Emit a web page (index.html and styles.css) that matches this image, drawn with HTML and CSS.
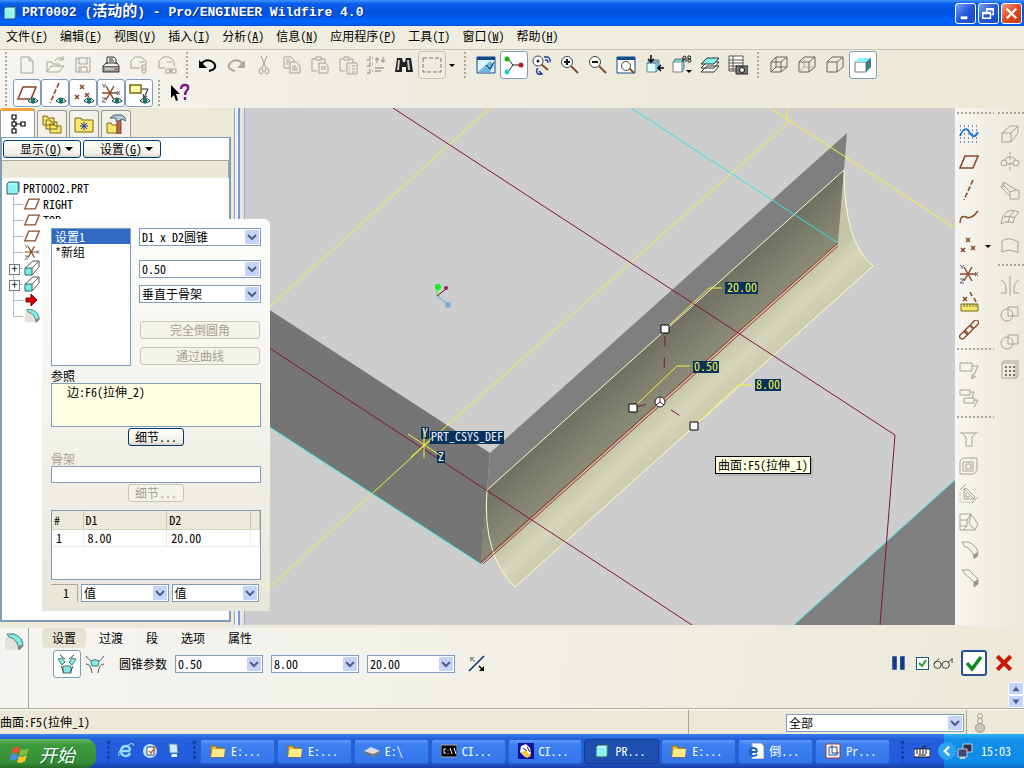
FILE: index.html
```
<!DOCTYPE html>
<html lang="zh-CN">
<head>
  <meta charset="UTF-8">
  <meta name="viewport" content="width=device-width, initial-scale=1.0">
  <title>PRT0002 (活动的) - Pro/ENGINEER Wildfire 4.0</title>
  <link rel="stylesheet" href="styles.css">
</head>
<body>
<!-- icon set -->
<svg class="defs" aria-hidden="true">
  <defs>
    <symbol id="cube" viewBox="0 0 16 16"><path d="M2 4l2-2h10v9l-2 3H2z" fill="#8ef2f2" stroke="#356" /><path d="M12 4l2-2v9l-2 3z" fill="#2b8c90"/><path d="M3 4h9v9" fill="none" stroke="#d8ffff"/></symbol>
    <symbol id="plane" viewBox="0 0 20 20"><path d="M6 4h13l-5 12H1z" fill="none" stroke="#8b4a2b" stroke-width="1.6"/></symbol>
    <symbol id="axis" viewBox="0 0 20 20"><path d="M14 0L5 20" fill="none" stroke="#8b4a2b" stroke-width="1.6" stroke-dasharray="5 2"/></symbol>
    <symbol id="points" viewBox="0 0 20 20"><path d="M7 2l4 4m0-4l-4 4M2 12l4 4m0-4l-4 4M12 10l4 4m0-4l-4 4" fill="none" stroke="#8b4a2b" stroke-width="1.6"/></symbol>
    <symbol id="csys" viewBox="0 0 20 20"><path d="M9 10H1m8 0h8M5 3l8 14M13 3L5 17" fill="none" stroke="#8b4a2b" stroke-width="1.5"/><path d="M1 1l2 2 2-2M3 3v2M16 8l3 4m0-4l-3 4M1 15h4l-4 4h4" fill="none" stroke="#567"/></symbol>
    <symbol id="eye" viewBox="0 0 10 7"><path d="M0 4Q5-2 10 4Q5 8 0 4" fill="#dfe" stroke="#333"/><circle cx="5" cy="4" r="2.4" fill="#087a7a"/></symbol>
    <symbol id="new" viewBox="0 0 20 20"><path d="M4 2h8l4 4v12H4zM12 2v4h4" class="g"/></symbol>
    <symbol id="open" viewBox="0 0 20 20"><path d="M2 17V7h5l1 2h6v2M2 17l4-6h13l-5 6zM10 6q3-5 8-2m0-3v4h-4" class="g"/></symbol>
    <symbol id="save" viewBox="0 0 20 20"><path d="M3 3h14v14H3zM6 3v6h8V3M6 17v-5h8v5M8 13v3" class="g"/></symbol>
    <symbol id="print" viewBox="0 0 20 20"><path d="M2 11h16v6H2z" fill="#999" stroke="#333"/><path d="M6 9V2h7l2 2v5M8 4h4M8 6h5M2 11l3-3h11l2 3" fill="#eee" stroke="#333"/><path d="M4 14h9" stroke="#eee"/><path d="M14 14h2" stroke="#c33"/></symbol>
    <symbol id="mail" viewBox="0 0 20 20"><path d="M2 13V6l4-4h6l5 4v4M2 13h9M10 7h5M13 10v7q2 3 4 0v-6q-2-3-4 0M15 12v4" class="g"/></symbol>
    <symbol id="maillink" viewBox="0 0 20 20"><path d="M2 13V6l4-4h6l5 4v5M2 13h6M10 7h5M9 14h4v4H9zM14 14h5v4h-5zM12 16h4" class="g"/></symbol>
    <symbol id="undo" viewBox="0 0 20 20"><path d="M3 9q6-7 13-1q4 6-5 8" fill="none" stroke="#000" stroke-width="2"/><path d="M1 5v8h8z"/></symbol>
    <symbol id="redo" viewBox="0 0 20 20"><path d="M17 9q-6-7-13-1q-4 6 5 8" fill="none" stroke="#aaa89c" stroke-width="2"/><path d="M19 5v8h-8z" fill="#aaa89c"/></symbol>
    <symbol id="cut" viewBox="0 0 20 20"><path d="M7 1l5 12M13 1L8 13" class="g"/><ellipse cx="7" cy="16" rx="2" ry="3" class="g"/><ellipse cx="13" cy="16" rx="2" ry="3" class="g"/></symbol>
    <symbol id="copy" viewBox="0 0 20 20"><path d="M2 2h7l3 3v8H2zM4 5h4M4 7h3M4 9h3" class="g"/><path d="M8 7h6l4 4v7H8z" fill="#f1efe6" stroke="#a5a396"/><path d="M10 11h4M10 13h6M10 15h6" class="g"/></symbol>
    <symbol id="paste" viewBox="0 0 20 20"><path d="M7 16H2V4h4V2h5v2h4v4M9 8h6l3 3v7H9zM6 5h6M11 12h5M11 14h5" class="g"/></symbol>
    <symbol id="pastes" viewBox="0 0 20 20"><path d="M7 16H2V4h4V2h5v2h4v4M9 8h10v11H9zM6 5h6M11 11h1M14 11h3M11 14h1M14 14h3M11 17h1M14 17h3" class="g"/></symbol>
    <symbol id="regen" viewBox="0 0 20 20"><path d="M4 1v4H1M4 7v4H1M4 14v4H1M6 3h1M6 9h1M6 16h1M11 8V3M9 5l2-2 2 2M17 2v5M15 5l2 2 2-2M9 13h9M9 16h6" class="g" stroke-width="1.3"/></symbol>
    <symbol id="find" viewBox="0 0 20 20"><path d="M3 3h5l1 4h2l1-4h5l2 14h-7v-5H8v5H1z" fill="#222"/><path d="M5 5L4 15M14 5l1 10" stroke="#ccc" stroke-width="2"/></symbol>
    <symbol id="selbox" viewBox="0 0 20 20"><path d="M1 3h18v14H1z" fill="none" stroke="#777" stroke-dasharray="4 2"/></symbol>
    <symbol id="repaint" viewBox="0 0 20 20"><path d="M1 2h18v16H1z" fill="#dff3ff" stroke="#124a91"/><path d="M1 2h18v3H1z" fill="#124a91"/><path d="M2 17L14 6l4 4-4 7z" fill="#6bb5e6"/><path d="M10 10l4 4 4-7" fill="none" stroke="#123"/></symbol>
    <symbol id="spin" viewBox="0 0 20 20"><path d="M4 4l5 6h9M9 10l-5 7" fill="none" stroke="#222"/><circle cx="3" cy="4" r="2.5" fill="#0b0"/><circle cx="17" cy="10" r="2.5" fill="#b02020"/><circle cx="3" cy="17" r="2.5" fill="#2cc"/></symbol>
    <symbol id="orient" viewBox="0 0 20 20"><path d="M9 9l7 6" stroke="#8b4a2b" stroke-width="2"/><circle cx="6" cy="6" r="5" class="k"/><circle cx="6" cy="6" r="1.5" fill="#222"/><path d="M12 2h4q3 2 2 5M13 5h2q1 1 1 3M6 13q-3 3 0 6h4M7 16l3 3-3 1" fill="none" stroke="#1b3c9b" stroke-width="1.4"/></symbol>
    <symbol id="zin" viewBox="0 0 20 20"><path d="M11 11l7 7" stroke="#8b4a2b" stroke-width="2"/><circle cx="7" cy="7" r="5.5" class="k"/><path d="M4 7h6M7 4v6" stroke="#111" stroke-width="2"/></symbol>
    <symbol id="zout" viewBox="0 0 20 20"><path d="M11 11l7 7" stroke="#8b4a2b" stroke-width="2"/><circle cx="7" cy="7" r="5.5" class="k"/><path d="M4 7h6" stroke="#111" stroke-width="2"/></symbol>
    <symbol id="refit" viewBox="0 0 20 20"><path d="M1 2h18v16H1z" fill="#fff" stroke="#124a91"/><path d="M1 2h18v3H1z" fill="#124a91"/><path d="M13 13l5 5" stroke="#8b4a2b" stroke-width="2"/><circle cx="10" cy="11" r="4.5" class="k"/></symbol>
    <symbol id="reorient" viewBox="0 0 20 20"><path d="M3 8h9v9H3z" fill="#dff"  stroke="#688"/><path d="M3 8l3-3h9l-3 3zM12 8l3-3v9l-3 3" fill="#7bd" stroke="#688"/><path d="M7 0v7M4 4l3 3 3-3M20 13h-6M17 10l-3 3 3 3" fill="none" stroke="#000" stroke-width="1.5"/></symbol>
    <symbol id="views" viewBox="0 0 20 20"><path d="M1 7h9v10H1z" fill="#fff" stroke="#777"/><path d="M1 7l2-3h9l-2 3M10 7l2-3v9l-2 4" fill="#7cc" stroke="#777"/><path d="M11 7V2l1-1h1l1 1v5M11 4h3M16 1h2l1 1-1 2h-2 2l1 1v1l-1 1h-2z" fill="none" stroke="#222"/><path d="M14 15h6l-3 3z"/></symbol>
    <symbol id="layers" viewBox="0 0 20 20"><path d="M7 11h12l-5 6H1zM7 7h12l-5 6H1z" fill="#fff" stroke="#333"/><path d="M7 3h12l-5 6H1z" fill="#7ff0ee" stroke="#333"/></symbol>
    <symbol id="vmgr" viewBox="0 0 20 20"><path d="M1 1h14v15H1zM1 5h14M1 8h14M1 11h14M1 14h14M5 1v15" fill="#fff" stroke="#555"/><path d="M8 11h12v8H8z" fill="#777" stroke="#222"/><circle cx="14" cy="15" r="2.5" fill="#eee" stroke="#111"/></symbol>
    <symbol id="wire" viewBox="0 0 20 20"><path d="M2 7h10v10H2zM7 2h11v10H7zM2 7l5-5M12 7l6-5M12 17l6-5M2 17l5-5" class="w"/></symbol>
    <symbol id="hidden" viewBox="0 0 20 20"><path d="M2 7h10v10H2zM2 7l5-5h11v10l-6 5M12 7l6-5" class="w"/><path d="M7 2v10h11M7 12l-5 5" fill="none" stroke="#aaa"/></symbol>
    <symbol id="nohid" viewBox="0 0 20 20"><path d="M2 7h10v10H2zM2 7l5-5h11v10l-6 5M12 7l6-5" class="w"/></symbol>
    <symbol id="shade" viewBox="0 0 20 20"><path d="M2 7h11v10H2z" fill="#fff" stroke="#777"/><path d="M2 7l4-4h12l-5 4z" fill="#8ef"/><path d="M13 7l5-4v9l-5 5z" fill="#347f86"/></symbol>
    <symbol id="note" viewBox="0 0 20 20"><path d="M1 2h11v8H1z" fill="#ffa" stroke="#776a10" stroke-width="1.5"/><path d="M13 6h6l-4 9M14 11l1 4 3-2" fill="none" stroke="#222"/></symbol>
    <symbol id="help" viewBox="0 0 20 20"><path d="M1 2v13l3-3 2 6 2-1-2-6h4z"/><path d="M11 6q0-4 4-4q4 0 3 4q-3 3-3 6M15 14v3" fill="none" stroke="#80128c" stroke-width="2.4"/></symbol>
    <symbol id="tree" viewBox="0 0 20 20"><path d="M4 1h4v4H4zM4 8h4v4H4zM4 15h4v4H4zM13 8h4v4h-4zM6 5v3M6 12v3M8 10h5" fill="#fff" stroke="#000" stroke-width="1.2"/></symbol>
    <symbol id="folders" viewBox="0 0 20 20"><path d="M1 2h4l1 2h6v7H1zM4 6h4l1 2h6v7H4zM8 10h4l1 2h6v7H8z" fill="#fbe66a" stroke="#77681b"/></symbol>
    <symbol id="fav" viewBox="0 0 20 20"><path d="M1 4h6l1 2h11v12H1z" fill="#fbe66a" stroke="#77681b"/><path d="M10 8v8M6 12h8M7 9l6 6M13 9l-6 6" stroke="#1238b5"/></symbol>
    <symbol id="hammer" viewBox="0 0 20 20"><path d="M1 9h4l1 2h5v8H1z" fill="#fbe66a" stroke="#77681b"/><path d="M11 6h4v14h-4z" fill="#c06a3a" stroke="#744"/><path d="M4 4l4-3h8l4 4v2l-4-2-3 2h-3V4z" fill="#bcd" stroke="#456"/></symbol>
    <symbol id="extrude" viewBox="0 0 16 16"><path d="M1 8h7v7H1z" fill="#7ee" stroke="#366"/><path d="M1 8l8-7h6v6l-7 8M8 8l7-7" fill="none" stroke="#555"/></symbol>
    <symbol id="insert" viewBox="0 0 16 16"><path d="M2 6h5V2l6 6-6 6v-4H2z" fill="#d00" stroke="#800"/></symbol>
    <symbol id="round" viewBox="0 0 20 20"><path d="M1 6l5-2q7 1 8 13l-8 1H1z" fill="#e3e2da"/><path d="M3 2h7q9 3 9 12l-4 4Q14 7 5 5z" fill="#7fe9e6" stroke="#577"/><path d="M15 14v4l4-3v-3z" fill="#888"/></symbol>
    <symbol id="sketch" viewBox="0 0 20 20"><path d="M1 2h18M1 6h18M1 10h18M1 14h18M1 18h18" stroke="#227" stroke-dasharray="1 3"/><path d="M1 12Q6 0 11 9q4 7 8-1" fill="none" stroke="#1375df" stroke-width="1.8"/></symbol>
    <symbol id="curve" viewBox="0 0 20 20"><path d="M1 15q0-8 6-6q5 3 12-6" fill="none" stroke="#8b4a2b" stroke-width="1.5"/></symbol>
    <symbol id="ruler" viewBox="0 0 20 20"><path d="M2 12h17v7H2z" fill="#f2e869" stroke="#776a10"/><path d="M5 12v3M8 12v3M11 12v3M14 12v3M17 12v3" stroke="#665"/><path d="M4 5l4 4m0-4L4 9M11 0l2 4M15 6l2 4" stroke="#8b4a2b" stroke-width="1.6"/></symbol>
    <symbol id="chain" viewBox="0 0 20 20"><g fill="none" stroke="#8b4a2b" stroke-width="1.4"><rect x="0" y="13" width="9" height="5" rx="2" transform="rotate(-45 4 15)"/><rect x="5" y="8" width="9" height="5" rx="2" transform="rotate(-45 9 10)"/><rect x="11" y="2" width="9" height="5" rx="2" transform="rotate(-45 15 4)"/></g></symbol>
    <symbol id="gextr" viewBox="0 0 20 20"><path d="M2 9h9v9H2zM2 9l8-7h8v7l-7 9M11 9l7-7" class="g"/></symbol>
    <symbol id="grev" viewBox="0 0 20 20"><path d="M10 0v20" class="g" stroke-dasharray="3 2"/><circle cx="4" cy="11" r="3" class="g"/><circle cx="16" cy="11" r="3" class="g"/><path d="M4 8q6-7 12 0M7 12h6" class="g"/></symbol>
    <symbol id="gswp" viewBox="0 0 20 20"><path d="M4 2l12 8h3v9h-9v-3L1 7zM4 2v4l6 6 6-2M1 7l3-1M10 12v4" class="g"/></symbol>
    <symbol id="gbnd" viewBox="0 0 20 20"><path d="M1 16Q2 7 8 3q5-2 11 1q-5 4-6 11q-5-3-12 1M4 9q6-2 11 1M8 15q0-7 6-12" class="g"/></symbol>
    <symbol id="gfill" viewBox="0 0 20 20"><path d="M2 16V5q7-5 16 1v11q-8-5-16-1z" class="g"/></symbol>
    <symbol id="gmir" viewBox="0 0 20 20"><path d="M10 0v20M1 4q6 2 5 13H1M19 4q-6 2-5 13h5" class="g"/></symbol>
    <symbol id="gmrg" viewBox="0 0 20 20"><circle cx="7" cy="11" r="6" class="g"/><path d="M8 3h10v9H8z" class="g"/></symbol>
    <symbol id="gpat" viewBox="0 0 20 20"><path d="M2 3h14v15H2zM2 3l2-2h14v15l-2 2" class="g"/><path d="M5 7h10M5 11h10M5 15h10" stroke="#77756a" stroke-width="2" stroke-dasharray="2 2"/></symbol>
    <symbol id="gann" viewBox="0 0 20 20"><path d="M1 3h12v8H1zM13 6h6l-6 13M13 14v5l4-3" class="g"/></symbol>
    <symbol id="gann2" viewBox="0 0 20 20"><path d="M1 2h10v5H1zM5 10h10v5H5zM11 4h4l-2 6M15 12h4l-4 7" class="g"/></symbol>
    <symbol id="ghole" viewBox="0 0 20 20"><path d="M1 5h18M3 5l4 4v9h6V9l4-4" class="g"/></symbol>
    <symbol id="gshell" viewBox="0 0 20 20"><path d="M1 5l3-3h14v12l-3 4H1zM4 6h10v9H4zM7 8h5v5H7z" class="g"/></symbol>
    <symbol id="grib" viewBox="0 0 20 20"><path d="M5 5v10h10zM5 5l2-1 9 9-1 2M7 9v4h4M1 6l6-6M13 19l6-6" class="g"/><path d="M1 7v11h12" class="g" stroke-dasharray="1 1"/></symbol>
    <symbol id="gdraft" viewBox="0 0 20 20"><path d="M1 2h11l7 10-3 6H1zM1 8h7v6H1M8 8l4-6M8 14l-4 4M12 2l-2 9 6 7" class="g"/></symbol>
    <symbol id="grnd" viewBox="0 0 20 20"><path d="M3 2h6q9 3 10 11l-4 5Q14 9 5 6z" class="g"/><path d="M15 14v5l4-3v-4z" fill="#999789"/></symbol>
    <symbol id="gchm" viewBox="0 0 20 20"><path d="M3 2h7l9 9v5l-4 3v-5L6 6z" class="g"/><path d="M15 14v5l4-3v-5z" fill="#999789"/></symbol>
    <symbol id="setm" viewBox="0 0 20 20"><path d="M1 5l4-1 3 4-3 3zM19 5l-4-1-3 4 3 3zM6 12h8v7H6z" fill="#7fe9e6" stroke="#577"/><path d="M3 1l5 4M17 1l-5 4M4 12l3 7M16 12l-3 7" stroke="#444"/></symbol>
    <symbol id="trans" viewBox="0 0 20 20"><path d="M6 7q4-3 8 0l-1 5H7z" fill="#7fe9e6" stroke="#577"/><path d="M1 2q4 5 5 5M19 2q-4 5-5 5M1 10q5 0 6 9M19 10q-5 0-6 9" fill="none" stroke="#555"/></symbol>
    <symbol id="flip" viewBox="0 0 20 20"><path d="M2 17L17 2" stroke="#12307a" stroke-width="1.6"/><path d="M4 4l4 4" stroke="#998" stroke-width="1.4"/><path d="M3 3h5L3 8z" fill="#998"/><path d="M12 12l4 4" stroke="#000" stroke-width="1.4"/><path d="M17 12v5h-5z"/></symbol>
    <symbol id="glasses" viewBox="0 0 22 14"><g fill="none" stroke="#333"><circle cx="5" cy="9" r="4"/><circle cx="14" cy="9" r="4"/><path d="M1 8l6-6M9 8h1M17 6l4-4v5"/></g></symbol>
    <symbol id="bulb" viewBox="0 0 12 20"><circle cx="6" cy="3" r="2.5" class="g"/><circle cx="6" cy="8" r="2.5" class="g"/><circle cx="6" cy="15" r="4.5" fill="#c9c7b8" stroke="#999"/></symbol>
    <symbol id="folder" viewBox="0 0 16 16"><path d="M1 3h5l1 2h7v9H1z" fill="#e9b93d" stroke="#8f6a12"/><path d="M3 6h12l-1 8H1z" fill="#ffe98b"/></symbol>
    <symbol id="drive" viewBox="0 0 16 16"><path d="M0 8l7-4 9 4-7 5z" fill="#ddd"/><path d="M0 8l9 3 7-3v2l-7 4-9-4z" fill="#777"/></symbol>
    <symbol id="cmd" viewBox="0 0 16 16"><path d="M0 2h16v12H0z" fill="#000" stroke="#aaa"/><path d="M5 6H3v4h2M7 7v1m0 2v1M9 5l2 6M13 5l2 6" stroke="#fff" fill="none"/></symbol>
    <symbol id="app" viewBox="0 0 16 16"><path d="M0 0h16v16H0z" fill="#1010a0"/><path d="M3 3l5-2 4 4 1 6-6 3-5-5z" fill="#fff"/><path d="M3 9l6 6 4-2-5-5z" fill="#f2cf2c"/><path d="M5 5l4 3M9 4l3 5" stroke="#222"/></symbol>
    <symbol id="iepage" viewBox="0 0 16 16"><path d="M4 0h9l3 3v13H4z" fill="#fff" stroke="#999"/><path d="M9 9H2q0-4 3-4 4 0 4 4M2 9q0 4 4 4 2 0 3-2" fill="none" stroke="#1960bd" stroke-width="1.8"/></symbol>
    <symbol id="frame" viewBox="0 0 16 16"><path d="M1 1h14v14H1z" fill="#fff" stroke="#a33"/><path d="M4 4h8v8H4zM7 2v8M7 10h7" fill="none" stroke="#249"/></symbol>
    <symbol id="ie" viewBox="0 0 16 16"><path d="M12 8H3q0-5 5-5 4 0 4 5M3 8q0 5 5 5 3 0 4-3" fill="none" stroke="#8fdcff" stroke-width="2.4"/><path d="M1 13Q-1 8 8 3t7 0" fill="none" stroke="#bde"/></symbol>
    <symbol id="desk" viewBox="0 0 16 16"><circle cx="8" cy="8" r="7" fill="#bfe3fa"/><path d="M5 4h7v8H5z" fill="#fff" stroke="#357"/><path d="M7 8l2 2 5-7" fill="none" stroke="#c63" stroke-width="1.5"/></symbol>
    <symbol id="pc" viewBox="0 0 16 16"><path d="M3 1h8l1 9H4z" fill="#cfeaff" stroke="#58a"/><path d="M6 11h5v3H5z" fill="#eee"/></symbol>
    <symbol id="flag" viewBox="0 0 20 20"><path d="M3 4q4-3 7 0L8 10q-3-3-7 0z" fill="#e8542d"/><path d="M11 5q4 2 8-1l-2 6q-4 3-8 1z" fill="#7cc142"/><path d="M1 11q3-3 7 0l-2 6q-3-3-7 0z" fill="#4d8fef"/><path d="M9 12q4 2 8-1l-2 6q-4 3-8 1z" fill="#fbc92c"/></symbol>
    <symbol id="kbd" viewBox="0 0 16 16"><path d="M0 6h16v8H0z" fill="#fff" stroke="#111"/><path d="M2 8h12M2 10h12" stroke="#111" stroke-dasharray="2 1"/><path d="M4 12h8M8 6q0-3 4-3" stroke="#111" fill="none"/></symbol>
    <symbol id="net" viewBox="0 0 16 16"><path d="M6 1h9v8H6z" fill="#334" stroke="#bcd"/><path d="M1 6h9v8H1z" fill="#447" stroke="#bcd"/><path d="M3 15h5" stroke="#ccc" stroke-width="2"/></symbol>
  </defs>
</svg>

<header class="titlebar">
  <svg class="i16"><use href="#cube"/></svg>
  <h1>PRT0002 (<span>活动的</span>) - Pro/ENGINEER Wildfire 4.0</h1>
  <button class="win" aria-label="最小化"><svg viewBox="0 0 20 20"><path d="M5 13h7v3H5z" fill="#fff"/></svg></button>
  <button class="win" aria-label="还原"><svg viewBox="0 0 20 20"><path d="M4 9h8v6H4zM4 10h8M8 8V5h7v6h-2M8 6h7" fill="none" stroke="#fff" stroke-width="1.5"/></svg></button>
  <button class="win close" aria-label="关闭"><svg viewBox="0 0 20 20"><path d="M5 5l10 10M15 5L5 15" stroke="#fff" stroke-width="2.4"/></svg></button>
</header>

<nav class="menubar">
  <a href="#">文件(<u>F</u>)</a><a href="#">编辑(<u>E</u>)</a><a href="#">视图(<u>V</u>)</a><a href="#">插入(<u>I</u>)</a><a href="#">分析(<u>A</u>)</a><a href="#">信息(<u>N</u>)</a><a href="#">应用程序(<u>P</u>)</a><a href="#">工具(<u>T</u>)</a><a href="#">窗口(<u>W</u>)</a><a href="#">帮助(<u>H</u>)</a>
</nav>

<div class="toolbars">
  <div class="bar">
    <i class="grip"></i>
    <button class="tb" aria-label="新建"><svg><use href="#new"/></svg></button>
    <button class="tb" aria-label="打开"><svg><use href="#open"/></svg></button>
    <button class="tb" aria-label="保存"><svg><use href="#save"/></svg></button>
    <button class="tb" aria-label="打印"><svg><use href="#print"/></svg></button>
    <button class="tb" aria-label="发送邮件"><svg><use href="#mail"/></svg></button>
    <button class="tb" aria-label="发送链接"><svg><use href="#maillink"/></svg></button>
    <i class="grip"></i>
    <button class="tb" aria-label="撤消"><svg><use href="#undo"/></svg></button>
    <button class="tb" aria-label="重做"><svg><use href="#redo"/></svg></button>
    <button class="tb" aria-label="剪切"><svg><use href="#cut"/></svg></button>
    <button class="tb" aria-label="复制"><svg><use href="#copy"/></svg></button>
    <button class="tb" aria-label="粘贴"><svg><use href="#paste"/></svg></button>
    <button class="tb" aria-label="选择性粘贴"><svg><use href="#pastes"/></svg></button>
    <button class="tb" aria-label="再生"><svg><use href="#regen"/></svg></button>
    <button class="tb" aria-label="查找"><svg><use href="#find"/></svg></button>
    <button class="tb framed" aria-label="选取框"><svg><use href="#selbox"/></svg></button>
    <i class="caret"></i>
    <i class="grip"></i>
    <button class="tb" aria-label="重画"><svg><use href="#repaint"/></svg></button>
    <button class="tb on" aria-label="旋转中心"><svg><use href="#spin"/></svg></button>
    <button class="tb" aria-label="定向模式"><svg><use href="#orient"/></svg></button>
    <button class="tb" aria-label="放大"><svg><use href="#zin"/></svg></button>
    <button class="tb" aria-label="缩小"><svg><use href="#zout"/></svg></button>
    <button class="tb" aria-label="重新调整"><svg><use href="#refit"/></svg></button>
    <button class="tb" aria-label="重定向"><svg><use href="#reorient"/></svg></button>
    <button class="tb" aria-label="视图列表"><svg><use href="#views"/></svg></button>
    <button class="tb" aria-label="层"><svg><use href="#layers"/></svg></button>
    <button class="tb" aria-label="视图管理器"><svg><use href="#vmgr"/></svg></button>
    <i class="grip"></i>
    <button class="tb" aria-label="线框"><svg><use href="#wire"/></svg></button>
    <button class="tb" aria-label="隐藏线"><svg><use href="#hidden"/></svg></button>
    <button class="tb" aria-label="无隐藏线"><svg><use href="#nohid"/></svg></button>
    <button class="tb on" aria-label="着色"><svg><use href="#shade"/></svg></button>
  </div>
  <div class="bar">
    <i class="grip"></i>
    <button class="tb on" aria-label="基准平面开关"><svg><use href="#plane"/></svg><svg class="eye"><use href="#eye"/></svg></button>
    <button class="tb on" aria-label="基准轴开关"><svg><use href="#axis"/></svg><svg class="eye"><use href="#eye"/></svg></button>
    <button class="tb on" aria-label="基准点开关"><svg><use href="#points"/></svg><svg class="eye"><use href="#eye"/></svg></button>
    <button class="tb on" aria-label="坐标系开关"><svg><use href="#csys"/></svg><svg class="eye"><use href="#eye"/></svg></button>
    <button class="tb on" aria-label="注释开关"><svg><use href="#note"/></svg><svg class="eye"><use href="#eye"/></svg></button>
    <i class="grip"></i>
    <button class="tb" aria-label="上下文帮助"><svg><use href="#help"/></svg></button>
  </div>
</div>

<main class="work">
  <aside class="navigator">
    <div class="tabs">
      <button class="tab sel" aria-label="模型树"><svg><use href="#tree"/></svg></button>
      <button class="tab" aria-label="文件夹"><svg><use href="#folders"/></svg></button>
      <button class="tab" aria-label="收藏夹"><svg><use href="#fav"/></svg></button>
      <button class="tab" aria-label="连接"><svg><use href="#hammer"/></svg></button>
    </div>
    <div class="treebox">
      <div class="treebtns">
        <button class="xp">显示(<u>O</u>)<i class="caret"></i></button>
        <button class="xp">设置(<u>G</u>)<i class="caret"></i></button>
      </div>
      <div class="treehead"></div>
      <ul class="tree">
        <li class="root"><svg class="i16"><use href="#cube"/></svg>PRT0002.PRT</li>
        <li><svg class="i16"><use href="#plane"/></svg>RIGHT</li>
        <li><svg class="i16"><use href="#plane"/></svg>TOP</li>
        <li><svg class="i16"><use href="#plane"/></svg></li>
        <li><svg class="i16"><use href="#csys"/></svg></li>
        <li class="plus"><svg class="i16"><use href="#extrude"/></svg></li>
        <li class="plus"><svg class="i16"><use href="#extrude"/></svg></li>
        <li><svg class="i16"><use href="#insert"/></svg></li>
        <li class="last"><svg class="i16"><use href="#round"/></svg></li>
      </ul>
    </div>
  </aside>
  <div class="splitter"></div>

  <section class="viewport">
    <svg class="scene" viewBox="245 108 710 517" preserveAspectRatio="xMinYMin slice">
      <defs>
        <linearGradient id="inner" gradientUnits="userSpaceOnUse" x1="626" y1="365" x2="660" y2="403"><stop offset="0" stop-color="#6f7060"/><stop offset="1" stop-color="#8b8c78"/></linearGradient>
        <linearGradient id="outer" gradientUnits="userSpaceOnUse" x1="660" y1="403" x2="687" y2="433"><stop offset="0" stop-color="#c3c4a8"/><stop offset=".5" stop-color="#d5d6ba"/><stop offset="1" stop-color="#cbccae"/></linearGradient>
      </defs>
      <!-- walls -->
      <path d="M245 294L490 453L481 564L245 411z" fill="#757575"/>
      <path d="M490 453L847 133L844 170L838 243L481 564z" fill="#7f7f7f"/>
      <path d="M955 480L794 625H955z" fill="#7f7f7f"/>
      <!-- round preview -->
      <path d="M487 490L844 170L838 243L481 564z" fill="url(#inner)"/>
      <path d="M838 243L844 170Q844 243 873 266L515 587Q500 577 493 553L481 564z" fill="url(#outer)"/>
      <path d="M487 490Q485 530 493 553L560 493L600 389z" fill="url(#inner)"/>
      <path d="M487 490L844 170Q844 243 873 266L515 587Q482 555 487 490" class="pale"/>
      <!-- datums -->
      <path d="M490 108L245 329M787 108V124L424 446L245 610M770 108L955 228" class="yellow"/>
      <path d="M631 108L838 243M245 411L481 564M955 480L794 625" class="cyan"/>
      <path d="M393 108L895 435L880 625M245 332L692 625" class="wine"/>
      <path d="M481 562L838 243M483 564L838 246" class="red"/>
      <path d="M665 336L664 375M636 407L652 403M671 410L682 417" class="wine" stroke-dasharray="10 12"/>
      <!-- dimension leaders -->
      <path d="M665 329L709 288H722M633 408L677 366H690M694 426L738 385H752" class="yellow"/>
      <path d="M661 325h8v8h-8zM629 404h8v8h-8zM690 422h8v8h-8z" class="handle"/>
      <circle cx="660" cy="402" r="5" fill="#fff" stroke="#222"/><path d="M660 397v5l-4 3M660 402l4 3" class="wine"/>
      <path d="M725 282h33v12h-33zM693 361h26v12h-26zM755 379h26v12h-26zM430 431h74v13h-74zM421 427h8v12h-8zM437 451h8v12h-8z" fill="#06325c"/>
      <g class="dim"><text x="727" y="292">20.00</text><text x="694" y="371">0.50</text><text x="756" y="389">8.00</text></g>
      <g class="csys"><text x="431" y="441">PRT_CSYS_DEF</text><text x="422" y="437">Y</text><text x="438" y="461">Z</text></g>
      <path d="M424 428V458M408 434L441 456M411 457L434 436" class="yellow"/>
      <!-- spin centre -->
      <g fill="none"><path d="M437 296V288" stroke="#2e2"/><path d="M437 296L446 289" stroke="#802"/><path d="M437 296L448 304" stroke="#6ad"/></g>
      <circle cx="438" cy="287" r="3" fill="#1e2"/><circle cx="446" cy="288" r="2" fill="#912548"/><circle cx="448" cy="305" r="3" fill="#77aee6"/>
    </svg>
    <div class="tooltip">曲面:F5(拉伸_1)</div>
  </section>

  <aside class="sidebars">
    <div class="vbar">
      <i class="hgrip"></i>
      <button class="tb" aria-label="草绘"><svg><use href="#sketch"/></svg></button>
      <button class="tb" aria-label="平面"><svg><use href="#plane"/></svg></button>
      <button class="tb" aria-label="轴"><svg><use href="#axis"/></svg></button>
      <button class="tb" aria-label="曲线"><svg><use href="#curve"/></svg></button>
      <div class="pair"><button class="tb" aria-label="点"><svg><use href="#points"/></svg></button><i class="caret"></i></div>
      <button class="tb" aria-label="坐标系"><svg><use href="#csys"/></svg></button>
      <button class="tb" aria-label="分析"><svg><use href="#ruler"/></svg></button>
      <button class="tb" aria-label="参照"><svg><use href="#chain"/></svg></button>
      <i class="hgrip"></i>
      <button class="tb" aria-label="注释"><svg><use href="#gann"/></svg></button>
      <button class="tb" aria-label="注释传播"><svg><use href="#gann2"/></svg></button>
      <i class="hgrip"></i>
      <button class="tb" aria-label="孔"><svg><use href="#ghole"/></svg></button>
      <button class="tb" aria-label="壳"><svg><use href="#gshell"/></svg></button>
      <button class="tb" aria-label="筋"><svg><use href="#grib"/></svg></button>
      <button class="tb" aria-label="拔模"><svg><use href="#gdraft"/></svg></button>
      <button class="tb" aria-label="倒圆角"><svg><use href="#grnd"/></svg></button>
      <button class="tb" aria-label="倒角"><svg><use href="#gchm"/></svg></button>
    </div>
    <div class="vbar narrow">
      <i class="hgrip"></i>
      <button class="tb" aria-label="拉伸"><svg><use href="#gextr"/></svg></button>
      <button class="tb" aria-label="旋转"><svg><use href="#grev"/></svg></button>
      <button class="tb" aria-label="扫描"><svg><use href="#gswp"/></svg></button>
      <button class="tb" aria-label="边界混合"><svg><use href="#gbnd"/></svg></button>
      <button class="tb" aria-label="造型"><svg><use href="#gfill"/></svg></button>
      <i class="hgrip"></i>
      <button class="tb" aria-label="镜像"><svg><use href="#gmir"/></svg></button>
      <button class="tb" aria-label="合并"><svg><use href="#gmrg"/></svg></button>
      <button class="tb" aria-label="修剪"><svg><use href="#gmrg"/></svg></button>
      <button class="tb" aria-label="阵列"><svg><use href="#gpat"/></svg></button>
    </div>
  </aside>

  <section class="panel">
    <div class="sets">
      <ul class="setlist"><li class="sel">设置1</li><li>*新组</li></ul>
      <div class="setopts">
        <select aria-label="截面形状"><option>D1 x D2圆锥</option></select>
        <select aria-label="圆锥值" class="gap"><option>0.50</option></select>
        <select aria-label="创建方法"><option>垂直于骨架</option></select>
        <button class="xp wide first" disabled>完全倒圆角</button>
        <button class="xp wide" disabled>通过曲线</button>
      </div>
    </div>
    <label for="refs">参照</label>
    <textarea id="refs" readonly>  边:F6(拉伸_2)</textarea>
    <button class="xp detail">细节...</button>
    <label for="spine" class="off">骨架</label>
    <input id="spine" type="text">
    <button class="xp detail" disabled>细节...</button>
    <div class="radii">
      <table>
        <thead><tr><th>#</th><th>D1</th><th>D2</th><th></th></tr></thead>
        <tbody><tr><td>1</td><td>8.00</td><td>20.00</td><td></td></tr></tbody>
      </table>
    </div>
    <div class="modes">
      <span class="count">1</span>
      <select aria-label="D1 方式"><option>值</option></select>
      <select aria-label="D2 方式"><option>值</option></select>
    </div>
  </section>
</main>

<section class="dash">
  <div class="feat"><svg class="i20"><use href="#round"/></svg></div>
  <div class="dashmain">
    <div class="dashtabs">
      <button class="sel">设置</button><button>过渡</button><button>段</button><button>选项</button><button>属性</button>
    </div>
    <div class="dashrow">
      <button class="tb on" aria-label="设置模式"><svg><use href="#setm"/></svg></button>
      <button class="tb" aria-label="过渡模式"><svg><use href="#trans"/></svg></button>
      <label for="conic">圆锥参数</label>
      <select id="conic"><option>0.50</option></select>
      <select aria-label="D1"><option>8.00</option></select>
      <select aria-label="D2"><option>20.00</option></select>
      <button class="tb" aria-label="反向"><svg><use href="#flip"/></svg></button>
    </div>
  </div>
  <div class="dashend">
    <div class="confirm">
      <button class="flat" aria-label="暂停"><svg viewBox="0 0 16 16"><path d="M2 2h4v12H2zM9 2h4v12H9z" fill="#103a90"/></svg></button>
      <div class="check">
        <input type="checkbox" id="preview" checked>
        <label for="preview" aria-label="预览"><svg class="glasses"><use href="#glasses"/></svg></label>
      </div>
      <button class="ok" aria-label="确定"><svg viewBox="0 0 20 20"><path d="M3 10l5 6 9-12" fill="none" stroke="#0a8f1c" stroke-width="3.5"/></svg></button>
      <button class="flat" aria-label="取消"><svg viewBox="0 0 16 16"><path d="M2 2l12 12M14 2L2 14" stroke="#cc1a0a" stroke-width="3.6"/></svg></button>
    </div>
    <div class="scrolls">
      <button aria-label="上"><svg viewBox="0 0 12 10"><path d="M6 3l3 4H3z" fill="#4d6185"/></svg></button>
      <button aria-label="下"><svg viewBox="0 0 12 10"><path d="M6 7l3-4H3z" fill="#4d6185"/></svg></button>
    </div>
  </div>
</section>

<div class="status">
  <span class="msg">曲面:F5(拉伸_1)</span>
  <div class="filter"><select aria-label="选取过滤器"><option>全部</option></select></div>
  <div class="traffic"><svg><use href="#bulb"/></svg></div>
</div>

<footer class="taskbar">
  <button class="start"><svg class="i20"><use href="#flag"/></svg>开始</button>
  <i class="dots"></i>
  <div class="quick">
    <a href="#" aria-label="Internet Explorer"><svg class="i16"><use href="#ie"/></svg></a>
    <a href="#" aria-label="显示桌面"><svg class="i16"><use href="#desk"/></svg></a>
    <a href="#" aria-label="我的电脑"><svg class="i16"><use href="#pc"/></svg></a>
  </div>
  <i class="dots"></i>
  <div class="tasks">
    <button><svg class="i16"><use href="#folder"/></svg>E:...</button>
    <button><svg class="i16"><use href="#folder"/></svg>E:...</button>
    <button><svg class="i16"><use href="#drive"/></svg>E:\</button>
    <button><svg class="i16"><use href="#cmd"/></svg>CI...</button>
    <button><svg class="i16"><use href="#app"/></svg>CI...</button>
    <button class="active"><svg class="i16"><use href="#cube"/></svg>PR...</button>
    <button><svg class="i16"><use href="#folder"/></svg>E:...</button>
    <button><svg class="i16"><use href="#iepage"/></svg>倒...</button>
    <button><svg class="i16"><use href="#frame"/></svg>Pr...</button>
  </div>
  <i class="dots"></i>
  <svg class="i16 kbd"><use href="#kbd"/></svg>
  <div class="tray">
    <button class="chev" aria-label="显示图标"><svg viewBox="0 0 16 16"><path d="M10 4L6 8l4 4" fill="none" stroke="#fff" stroke-width="2"/></svg></button>
    <svg class="i16"><use href="#net"/></svg>
    <time>15:03</time>
  </div>
</footer>
</body>
</html>
```
FILE: styles.css
```
:root {
  --face: #ece9d8;
  --line: #7f9db9;
  --navy: #003c74;
}
* { box-sizing: border-box; }
body { margin: 0; height: 100vh; display: flex; flex-direction: column; overflow: hidden; background: var(--face); color: #000; font-family: "Noto Sans CJK SC", sans-serif; font-size: 12px; line-height: 16px; font-feature-settings: "hwid"; }
button, select, input, textarea { font: inherit; font-feature-settings: inherit; color: inherit; margin: 0; padding: 0; }
ul { list-style: none; margin: 0; padding: 0; }
a { color: inherit; text-decoration: none; }
svg { display: block; flex: none; }
.defs { position: absolute; width: 0; height: 0; }
.g { fill: none; stroke: #a5a396; }
.k { fill: #fff; stroke: #444; }
.w { fill: none; stroke: #66655c; }
.i16 { width: 16px; height: 16px; }
.i20 { width: 20px; height: 20px; }

/* title */
.titlebar { display: flex; align-items: center; flex: none; height: 26px; gap: 2px; padding: 0 2px; background: linear-gradient(#3c93ff, #0a5ce8 15%, #0051e0 50%, #0066ff 85%, #0050d8); }
.titlebar h1 { flex: 1; margin: 0 2px; color: #fff; font: bold 13px/20px "Liberation Mono", "Noto Sans CJK SC", monospace; text-shadow: 1px 1px #0a2f80; white-space: nowrap; }
.titlebar h1 span { font-size: 15px; }
.win { width: 21px; height: 21px; border: 1px solid #fff; border-radius: 3px; background: linear-gradient(135deg, #7ea4f5, #2456d8 50%, #1b4cc8); }
.win.close { background: linear-gradient(135deg, #f0a088, #de4b20 50%, #c43c14); }

/* menus and toolbars */
.menubar { display: flex; flex: none; gap: 12px; height: 23px; padding: 2px 6px; background: #efeddf; white-space: nowrap; }
.toolbars { flex: none; padding: 1px 0; border-top: 1px solid #c9c6b5; background: linear-gradient(90deg, #f5f4f0, #edebdd 50%, var(--face)); }
.bar { display: flex; align-items: center; height: 28px; }
.grip { width: 13px; height: 26px; background: repeating-linear-gradient(#aaa898 0 2px, transparent 2px 4px) 5px 0 / 2px 100% no-repeat; }
.tb { position: relative; flex: none; width: 28px; height: 28px; border: 1px solid transparent; border-radius: 3px; background: none; display: flex; align-items: center; justify-content: center; }
.tb svg { width: 20px; height: 20px; }
.tb.on { border-color: #7f9db9; background: #fff; }
.tb.framed { border-color: #c4c1b2; }
.tb .eye { position: absolute; right: 2px; bottom: 2px; width: 10px; height: 7px; }
.caret { display: inline-block; margin: 0 3px; border: 4px solid transparent; border-top-color: #000; border-bottom: 0; }
.bar .caret { margin: 0 4px 0 3px; border-width: 3px 3px 0; }

/* work area */
.work { position: relative; flex: 1; display: flex; min-height: 0; }
.navigator { display: flex; flex-direction: column; width: 231px; flex: none; padding-bottom: 3px; }
.tabs { display: flex; gap: 2px; height: 29px; }
.tab { width: 30px; margin-top: 2px; display: flex; align-items: center; justify-content: center; border: 1px solid #919b9c; border-bottom: 0; border-radius: 3px 3px 0 0; background: #f4f2e8; }
.tab.sel { width: 35px; margin-top: 0; border-top: 3px solid #f2a43a; background: #fff; }
.tab svg { width: 20px; height: 20px; }
.treebox { flex: 1; border: 1px solid var(--line); border-width: 1px 2px 2px; background: #fff; }
.treebtns { display: flex; gap: 2px; padding: 2px 1px; }
.xp { height: 18px; border: 1px solid var(--navy); border-radius: 3px; background: linear-gradient(#fff, #f0eee4 80%, #d6d0c5); line-height: 14px; white-space: nowrap; }
.xp:disabled { border-color: #c9c7ba; background: #f4f3ea; color: #a3a191; }
.treebtns .xp { display: flex; align-items: center; justify-content: center; width: 78px; padding-left: 12px; }
.treehead { height: 18px; border: solid #aaa898; border-width: 1px 1px 0 0; background: #ebe8d8; }
.tree { padding: 2px 0 0 3px; }
.tree li { position: relative; display: flex; align-items: center; gap: 3px; height: 16px; padding-left: 19px; background: linear-gradient(#bbb, #bbb) 8px 0 / 1px 100% no-repeat, linear-gradient(#bbb, #bbb) 8px 8px / 10px 1px no-repeat; }
.tree .last { background-size: 1px 8px, 10px 1px; }
.tree .root { padding-left: 0; gap: 2px; background: none; }
.tree .plus::before { content: "+"; position: absolute; left: 4px; top: 4px; width: 9px; height: 9px; border: 1px solid #777; background: #fff; line-height: 6px; text-align: center; }
.splitter { width: 14px; flex: none; border-right: 1px solid #8ba3e0; background: linear-gradient(90deg, var(--face) 0 3px, #8ba3e0 3px 4px, #f4f3ec 4px 7px, #7a96df 7px 9px, #e6e5e0 9px); }
.viewport { position: relative; flex: 1; min-width: 0; background: #cdcdcd; overflow: hidden; }
.scene { width: 100%; height: 100%; }
.scene text { font-size: 12px; }
.yellow { fill: none; stroke: #f2f23c; }
.cyan { fill: none; stroke: #35e3e3; }
.wine { fill: none; stroke: #85143a; }
.red { fill: none; stroke: #a82b2b; }
.pale { fill: none; stroke: #fdfccf; }
.handle { fill: #fff; stroke: #000; }
.dim { fill: #f6f63c; }
.csys { fill: #eef; }
.tooltip { position: absolute; left: 470px; top: 348px; padding: 0 2px; border: 1px solid #000; background: #ffffe1; box-shadow: 2px 2px 2px #8886; white-space: nowrap; }
.sidebars { flex: none; display: flex; gap: 2px; width: 69px; background: linear-gradient(90deg, #f7f6f2, #f0eee2 50%, var(--face)); }
.vbar { width: 39px; }
.vbar.narrow { width: 28px; }
.hgrip { display: block; height: 12px; background: repeating-linear-gradient(90deg, #aaa898 0 2px, transparent 2px 4px) 2px 4px / 100% 2px no-repeat; }
.pair { display: flex; align-items: center; }
.pair .caret { margin: 0 2px; border-width: 3px 3px 0; }

/* round sets panel */
select { appearance: none; height: 18px; width: 100%; padding: 0 20px 0 2px; border: 1px solid var(--line); border-radius: 0; line-height: 16px; background: #fff url("data:image/svg+xml,%3Csvg xmlns='http://www.w3.org/2000/svg' width='16' height='16'%3E%3Crect x='1' y='1' width='14' height='14' rx='1' fill='%23c4d4fb'/%3E%3Cpath d='M4 6l4 4 4-4' fill='none' stroke='%234d6185' stroke-width='2'/%3E%3C/svg%3E") right center no-repeat; }
.panel { position: absolute; left: 42px; top: 111px; width: 228px; padding: 9px; border-radius: 0 6px 0 0; background: linear-gradient(#fdfdfb, #f4f3ec 50%, #e8e6d8); display: flex; flex-direction: column; }
.sets { display: flex; gap: 8px; }
.setlist { width: 80px; height: 138px; border: 1px solid var(--line); background: #fff; line-height: 15px; }
.setlist li { padding: 0 3px; }
.setlist .sel { background: #316ac5; color: #fff; }
.setopts { flex: 1; display: flex; flex-direction: column; }
.setopts .gap { margin: 14px 0 7px; }
.xp.wide { margin: 0 1px; }
.xp.wide.first { margin: 18px 1px 8px; }
.panel label { height: 17px; line-height: 19px; }
.panel label.off { margin-top: 3px; color: #a3a191; }
textarea { display: block; height: 44px; padding: 0 3px; border: 1px solid var(--line); border-radius: 0; background: #ffffe1; resize: none; outline: 0; }
.panel input { height: 17px; border: 1px solid var(--line); }
.detail { width: 56px; align-self: center; margin-top: 1px; }
.radii { height: 70px; margin-top: 8px; border: 1px solid var(--line); background: #fff; }
.radii table { width: 100%; border-collapse: collapse; table-layout: fixed; }
.radii th { height: 18px; padding: 0 2px; border-right: 1px solid #c9c7ba; border-bottom: 1px solid #d6d2c2; background: #ebeadb; font-weight: normal; line-height: 16px; text-align: left; }
.radii td { height: 17px; padding: 0 4px; border: 1px solid #eeece2; border-width: 0 1px 1px 0; }
.radii th:first-child { width: 31px; }
.radii th:last-child { width: 9px; }
.modes { display: flex; gap: 3px; margin: 4px 2px 0 0; }
.modes select { flex: 1; width: auto; min-width: 0; }
.count { width: 27px; padding-right: 8px; border: solid #aaa898; border-width: 1px 1px 0 0; background: #ebe8d8; text-align: right; }

/* dashboard */
.dash { display: flex; flex: none; height: 84px; border-top: 3px solid #edebdf; border-bottom: 1px solid #aca899; background: linear-gradient(100deg, #f4f4f2, #f3f2ea 35%, var(--face)); }
.feat { width: 29px; padding: 4px; border-right: 1px solid #aca899; }
.dashmain { flex: 1; padding-left: 13px; }
.dashtabs { display: flex; gap: 3px; }
.dashtabs button { height: 20px; padding: 0 10px; border: 0; border-radius: 4px; background: none; }
.dashtabs .sel { background: #e6e3d3; }
.dashrow { display: flex; align-items: center; gap: 8px; padding: 2px 0 0 11px; }
.dashrow .tb + .tb { margin-left: -8px; }
.dashrow label { margin-left: 2px; }
.dashrow select { width: 88px; }
.dashend { display: flex; flex-direction: column; justify-content: space-between; align-items: flex-end; padding-top: 22px; }
.confirm { display: flex; align-items: center; gap: 8px; padding-right: 11px; }
.check { display: flex; align-items: center; gap: 4px; }
.flat { width: 18px; height: 18px; border: 0; background: none; }
.flat svg { width: 18px; height: 18px; }
.check input { appearance: none; width: 13px; height: 13px; border: 1px solid #1c5180; background: #fff url("data:image/svg+xml,%3Csvg xmlns='http://www.w3.org/2000/svg' width='11' height='11'%3E%3Cpath d='M2 5l3 3 4-6' fill='none' stroke='%2321a121' stroke-width='2'/%3E%3C/svg%3E"); }
.glasses { width: 20px; height: 14px; }
.ok { width: 26px; height: 26px; padding: 1px; border: 2px solid #2a4f94; border-radius: 3px; background: #fff; }
.scrolls button { display: block; width: 16px; height: 13px; border: 1px solid #fff; border-radius: 2px; background: #c4d4fb; }

/* status line */
.status { display: flex; flex: none; height: 25px; border-top: 1px solid #fff; background: var(--face); }
.msg { flex: 1; line-height: 23px; }
.filter { width: 279px; padding: 4px 2px 0 97px; border: solid #aca899; border-width: 0 1px; }
.traffic { width: 57px; padding: 3px 7px; }
.traffic svg { width: 12px; height: 20px; }

/* taskbar */
.taskbar { display: flex; align-items: center; flex: none; height: 34px; background: linear-gradient(#3a80ee, #245edb 15%, #235cdc 80%, #1941a5); color: #fff; }
.start { display: flex; align-items: center; gap: 9px; width: 96px; height: 29px; align-self: flex-end; padding-left: 10px; border: 0; border-radius: 0 10px 10px 0; background: linear-gradient(#62b562, #3c9a3c 20%, #378f37 80%, #256b25); font-size: 18px; font-style: italic; text-shadow: 1px 1px #163; }
.dots { width: 24px; height: 22px; background: radial-gradient(#123c9e 1px, transparent 2px) 10px 0 / 5px 5px repeat-y; }
.quick { display: flex; gap: 8px; width: 64px; }
.tasks { flex: 1; display: flex; gap: 2px; min-width: 0; margin-left: -6px; }
.dots + .quick { margin-left: -2px; }
.tasks button { flex: 1; display: flex; align-items: center; gap: 5px; height: 25px; min-width: 0; padding: 0 9px; border: 1px solid #2b62cc; border-radius: 3px; background: linear-gradient(#5c9bff, #3c80f2 20%, #3476ea); }
.tasks .active { background: #1e4fb0; border-color: #163c8c; }
.kbd { margin-right: 14px; }
.tray { display: flex; align-items: center; gap: 1px; align-self: stretch; width: 80px; background: linear-gradient(#30b5f5, #1290e8 15%, #0f8bea 85%, #0d6cc0); }
.chev { width: 18px; height: 18px; border: 0; border-radius: 50%; background: #2aa3f0; margin-left: -6px; }
.tray time { margin-left: 7px; }
```
